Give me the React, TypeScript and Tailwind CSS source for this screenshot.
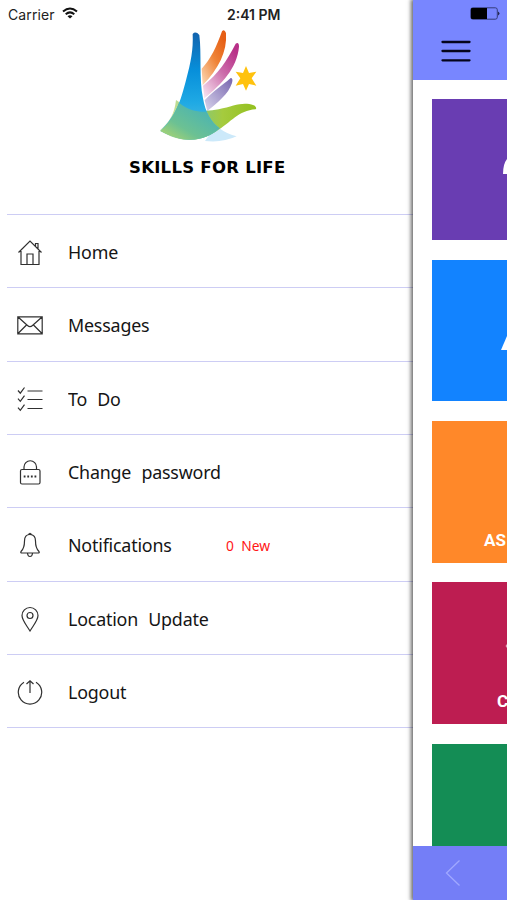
import type { ReactNode } from "react";

type Item = { label: string; icon: ReactNode; badge?: string };

const items: Item[] = [
  {
    label: "Home",
    icon: <path d="M1.500 13.500 13 2l11.500 11.500M4 12v13.500h18V12M10 25.500V15h6v10.500M18.500 7V4.500h2.500V9.500" />,
  },
  {
    label: "Messages",
    icon: <path d="M.8 4.800h24.400v17H.8zM1 5l9.500 8.500q2.500 2.200 5 0L25 5M1 21.500l8.500-8.500M25 21.500 16.500 13" />,
  },
  {
    label: "To Do",
    icon: <path d="M1 4.500l2.300 2.700L7.500 1.500M1 12.700l2.300 2.700L7.500 9.700M1 21.700l2.300 2.700L7.500 18.700M10.500 5h15M10.500 13.500h15M10.500 22.500h15" />,
  },
  {
    label: "Change password",
    icon: (
      <>
        <rect x="3.500" y="10.500" width="19.500" height="14.500" rx="1.500" />
        <path d="M7 10.500V8a6 6 0 0 1 12.500 0v2.500" />
        <path d="M6.700 17.500h13" strokeWidth="1.800" strokeDasharray="1.800 1.800" />
      </>
    ),
  },
  {
    label: "Notifications",
    icon: <path d="M13 2.500c-4 0-5.500 3-5.500 6.500 0 5-.8 8-3.500 10.500q-.8 1.500 1 1.500h16q1.800 0 1-1.500c-2.700-2.500-3.500-5.500-3.500-10.500 0-3.500-1.500-6.500-5.500-6.500zM11.500 2.500q1.500-2.500 3 0M10.500 21.500q.5 3 2.500 3t2.500-3" />,
    badge: "0 New",
  },
  {
    label: "Location Update",
    icon: (
      <>
        <path d="M13 25C9 18.500 5 14 5 9.500a8 8 0 0 1 16 0C21 14 17 18.500 13 25z" />
        <circle cx="13" cy="9.500" r="3" />
      </>
    ),
  },
  {
    label: "Logout",
    icon: <path d="M7 3.300a11.700 11.700 0 1 0 12 0M13 14V2M9.500 5 13 1.700 16.500 5" />,
  },
];

function Logo() {
  return (
    <svg viewBox="0 24 360 366" className="ml-[150px] h-[122px] w-[120px] shrink-0">
      <defs>
        <linearGradient id="blue" x1="0" y1="0" x2="0" y2="1">
          <stop offset="0" stopColor="#1263ae" />
          <stop offset=".35" stopColor="#078fda" />
          <stop offset=".65" stopColor="#1fa9e4" />
          <stop offset="1" stopColor="#5cc4dd" />
        </linearGradient>
        <linearGradient id="orange" x1=".9" y1="0" x2=".1" y2="1">
          <stop offset=".1" stopColor="#e65f16" />
          <stop offset=".5" stopColor="#ef8438" />
          <stop offset="1" stopColor="#fbd5b0" />
        </linearGradient>
        <linearGradient id="magenta" x1=".9" y1="0" x2=".1" y2="1">
          <stop offset=".1" stopColor="#b83188" />
          <stop offset=".5" stopColor="#cc6dab" />
          <stop offset="1" stopColor="#f6e0ee" />
        </linearGradient>
        <linearGradient id="violet" x1="1" y1="0" x2="0" y2="1">
          <stop offset="0" stopColor="#7765ae" />
          <stop offset="1" stopColor="#d9d5ec" />
        </linearGradient>
        <linearGradient id="green" x1="0" y1="0" x2="1" y2="0">
          <stop offset="0" stopColor="#dce9a8" />
          <stop offset=".45" stopColor="#8cc870" />
          <stop offset=".65" stopColor="#a5cb3e" />
          <stop offset="1" stopColor="#93c01f" />
        </linearGradient>
        <linearGradient id="teal" x1="0" y1="1" x2="1" y2="0">
          <stop offset="0" stopColor="#b9d869" />
          <stop offset=".35" stopColor="#6cc193" />
          <stop offset="1" stopColor="#3caec0" />
        </linearGradient>
      </defs>
      <path d="M155 146C182 119 201 77 216 34q7-8 12 5c4 57-23 108-70 157z" fill="url(#orange)" />
      <path d="M159 197c45-34 73-77 98-126q10-6 10 9c-6 65-52 112-104 155z" fill="url(#magenta)" />
      <path d="M164 241c28-31 50-42 78-67q8 0 4 15c-11 34-42 57-74 84z" fill="url(#violet)" />
      <path d="M165 363q35-50 43-38 24 18 52 24-42 20-95 14z" fill="#cce9fa" />
      <path d="M78 240c49 35 86 36 128 28 48-10 71-24 105-12q11 5 6 12c-53 4-72 38-120 67-48 32-112 35-167-4 30-27 43-49 48-91z" fill="url(#green)" />
      <path d="M128 42q9-10 20 3c7 56-1 131 11 190 7 42 24 72 50 90-43 39-107 48-178 8 47-46 60-86 77-152 15-56 22-92 20-139z" fill="url(#blue)" />
      <path d="M87 248c29 23 54 28 82 27 11 22 23 37 40 50-43 39-107 48-178 8 28-25 43-51 56-85z" fill="url(#teal)" />
      <path d="M288 138 297 159 319 155 305 175 319 197 297 192 288 212 279 192 257 197 271 175 257 155 279 159z" fill="#ffc20e" />
    </svg>
  );
}

function Tile({ className, children }: { className: string; children?: ReactNode }) {
  return <div className={`h-[141.700px] shrink-0 overflow-hidden ${className}`}>{children}</div>;
}

export default function App() {
  return (
    <div className="flex h-[900px] w-[507px] overflow-hidden bg-white">
      <aside className="flex w-[413px] shrink-0 flex-col">
        <div className="flex h-7 shrink-0 items-center pl-2 font-['Inter',sans-serif] text-[#222]">
          <span className="w-[53px] text-[14px] tracking-[0.1px]">Carrier</span>
          <svg viewBox="0 0 18 14" className="-mt-0.5 h-3.5 w-[18px]">
            <g fill="none" stroke="#111" strokeWidth="2">
              <path d="M2 5.500q7-6 14 0" />
              <path d="M4.700 8.200q4.300-3.600 8.600 0" />
            </g>
            <path d="m9 12.500-2.500-2.300q2.500-2 5 0z" fill="#111" />
          </svg>
          <span className="ml-[148px] whitespace-nowrap text-[14px] font-semibold">2:41 PM</span>
        </div>
        <Logo />
        <h1 className="ml-[129px] mt-[5px] h-[59px] whitespace-nowrap font-['DejaVu_Sans',sans-serif] text-[16.500px] font-bold leading-[25px] tracking-[0.270px] text-black">
          SKILLS FOR LIFE
        </h1>
        <nav className="ml-[7px] border-t border-[#cdcdf4] font-['Noto_Sans',sans-serif] text-[#151515]">
          {items.map((item) => (
            <div key={item.label} className="flex h-[73.330px] items-center border-b border-[#cdcdf4] pl-[10px] pt-[2px]">
              <svg viewBox="0 0 26 26" className="h-[26px] w-[26px] shrink-0" fill="none" stroke="#303030" strokeWidth="1.200">
                {item.icon}
              </svg>
              <span className="ml-[25px] w-[158px] origin-left scale-x-[0.950] whitespace-nowrap text-[18.800px] tracking-[-0.200px] [word-spacing:6px]">
                {item.label}
              </span>
              {item.badge && (
                <span className="origin-left scale-x-[0.920] whitespace-nowrap text-[15px] text-[#ff1616] [word-spacing:4px]">{item.badge}</span>
              )}
            </div>
          ))}
        </nav>
      </aside>
      <main className="flex w-[94px] shrink-0 flex-col bg-white shadow-[-1px_0_4px_1px_rgba(0,0,0,0.6)]">
        <header className="flex h-[79.500px] shrink-0 flex-col bg-[#7886ff]">
          <svg viewBox="0 0 30 14" className="ml-[57px] mt-[7px] h-[14px] w-[30px] shrink-0">
            <rect x=".8" y=".8" width="26.500" height="11.400" rx="2" fill="none" stroke="#343b78" />
            <path d="M1 2q0-1 1-1h15v11H2q-1 0-1-1z" fill="#000" />
            <path d="M28 4.500q3 2 0 4z" fill="#222752" />
          </svg>
          <svg viewBox="0 0 30 24" className="ml-[28px] mt-[18px] h-6 w-[30px] shrink-0">
            <path d="M1.500 3h27M1.500 12h27M1.500 21.300h27" stroke="#05051c" strokeWidth="2.300" strokeLinecap="round" />
          </svg>
        </header>
        <div className="flex min-h-0 flex-1 flex-col gap-[19.600px] overflow-hidden pl-[19px] pt-[19px] font-['Roboto',sans-serif] text-[17px] font-bold text-white">
          <Tile className="bg-[#693db2]">
            <svg viewBox="0 0 5 16" className="ml-[70px] mt-[60px] h-4 w-[5px]">
              <path d="M5 0Q1 5 1 15h4z" fill="white" />
            </svg>
          </Tile>
          <Tile className="bg-[#1283ff]">
            <svg viewBox="0 0 7 14" className="ml-[68px] mt-[76px] h-3.5 w-[7px]">
              <path d="M7 0 1 14h6z" fill="white" />
            </svg>
          </Tile>
          <Tile className="bg-[#ff8829]">
            <div className="ml-[52px] mt-[107px] whitespace-nowrap leading-6">AS</div>
          </Tile>
          <Tile className="bg-[#bd1d51]">
            <svg viewBox="0 0 2 6" className="ml-[73px] mt-[61px] h-1.5 w-0.5">
              <path d="M2 1 .5 3 2 5z" fill="#e8a9bf" />
            </svg>
            <div className="ml-[65px] mt-[40px] whitespace-nowrap leading-6">C</div>
          </Tile>
          <Tile className="bg-[#148d55]" />
        </div>
        <footer className="flex h-[54px] shrink-0 items-center bg-[#747ef7] pl-[32px]">
          <svg viewBox="0 0 16 28" className="h-7 w-4">
            <path d="M14.500 1.500 1.500 14l13 12.500" fill="none" stroke="#a0a8ff" strokeWidth="1.300" />
          </svg>
        </footer>
      </main>
    </div>
  );
}
